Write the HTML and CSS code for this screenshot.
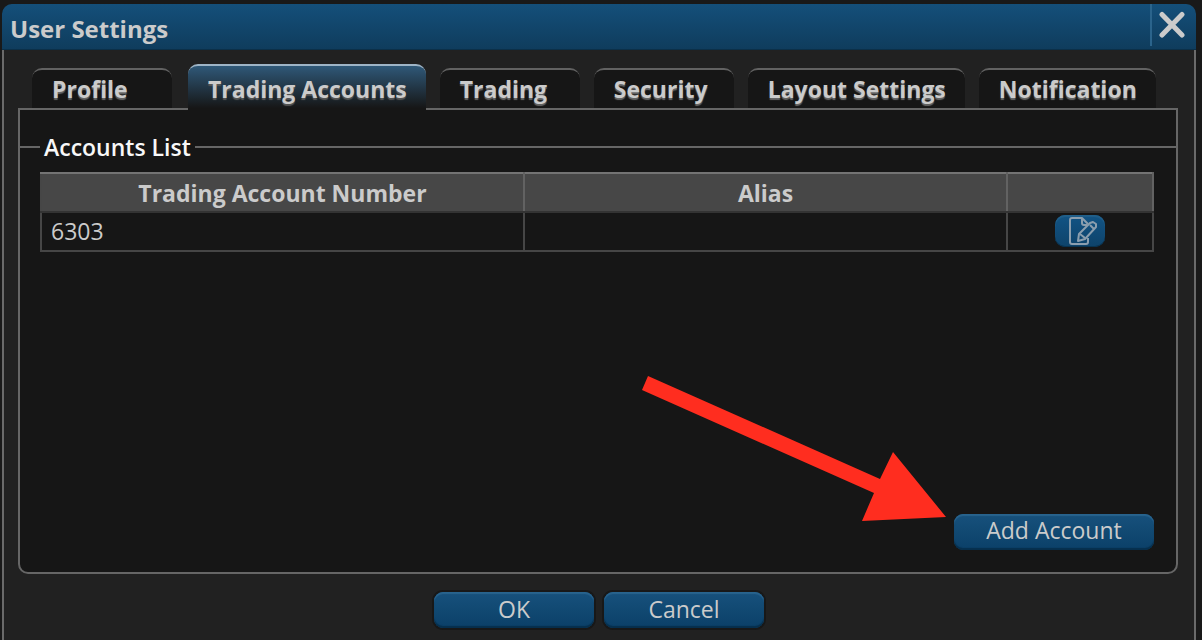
FILE: index.html
```html
<!DOCTYPE html>
<html lang="en">
<head>
<meta charset="utf-8">
<title>User Settings</title>
<link rel="stylesheet" href="styles.css">
</head>
<body>
<main class="dialog" role="dialog" aria-labelledby="dialog-title">
  <header class="titlebar">
    <h1 class="title" id="dialog-title">User Settings</h1>
    <button class="close" type="button" aria-label="Close">
      <svg width="28" height="30" viewBox="0 0 28 30"><path d="M3 4.500 23 25M23 4.500 3 25" fill="none" stroke="#cbcbcb" stroke-width="5" stroke-linecap="round"/></svg>
    </button>
  </header>
  <nav class="tabs" role="tablist">
    <button class="tab" type="button" role="tab">Profile</button>
    <button class="tab tab-active" type="button" role="tab" aria-selected="true">Trading Accounts</button>
    <button class="tab" type="button" role="tab">Trading</button>
    <button class="tab" type="button" role="tab">Security</button>
    <button class="tab" type="button" role="tab">Layout Settings</button>
    <button class="tab" type="button" role="tab">Notification</button>
  </nav>
  <section class="panel" role="tabpanel">
    <fieldset class="group">
      <legend class="legend">Accounts List</legend>
      <table class="accounts">
        <colgroup><col><col><col class="col-action"></colgroup>
        <thead>
          <tr><th scope="col">Trading Account Number</th><th scope="col">Alias</th><th></th></tr>
        </thead>
        <tbody>
          <tr>
            <td>6303</td>
            <td></td>
            <td class="cell-action">
              <button class="edit" type="button" aria-label="Edit account">
                <svg width="30" height="30" viewBox="0 0 30 30" fill="none" stroke="#8b9eae" stroke-width="2" stroke-linejoin="round"><path d="M20 22V26Q20 28 18 28H4Q2 28 2 26V4Q2 2 4 2H14L20 8M14 2V7Q14 9 16 9H19"/><path d="M25 6 28 8V11L17 23 10 25 11 18 22 7Z"/><path d="M22 9 26 13M12 18 17 22"/></svg>
              </button>
            </td>
          </tr>
        </tbody>
      </table>
    </fieldset>
    <div class="actions">
      <svg class="arrow" width="304" height="145" viewBox="0 0 304 145" aria-hidden="true"><path d="M6 0 238 103 251 76 304 141 220 145 232 117 0 14Z" fill="#ff2d1f"/></svg>
      <button class="btn btn-add" type="button">Add Account</button>
    </div>
  </section>
  <footer class="footer">
    <button class="btn" type="button">OK</button>
    <button class="btn" type="button">Cancel</button>
  </footer>
</main>
</body>
</html>
```
FILE: styles.css
```css
* {
  box-sizing: border-box;
}

body {
  margin: 0;
  background: #191919;
  color: #cbcbcb;
  font: 23px/30px "Open Sans", "Noto Sans", sans-serif;
}

button {
  margin: 0;
  border: 0;
  color: inherit;
  font: inherit;
  cursor: pointer;
}

svg {
  display: block;
}

.dialog {
  position: relative;
  display: flex;
  flex-direction: column;
  min-height: calc(100vh - 4px);
  margin: 4px 6px 0 2px;
  border-radius: 10px 10px 0 0;
  background: #212121;
}

.dialog::after {
  position: absolute;
  inset: 46px 0 0;
  border: solid #6a6a6a;
  border-width: 0 2px;
  content: "";
  pointer-events: none;
}

.titlebar {
  display: flex;
  justify-content: space-between;
  height: 46px;
  border-radius: 10px 10px 0 0;
  background: linear-gradient(#144f7a, #0f3c5c);
  box-shadow: inset 0 -1px #0b3049;
}

.title {
  margin: 0;
  padding: 0 8px;
  font-size: 24px;
  font-weight: 700;
  line-height: 50px;
}

.close {
  width: 46px;
  height: 42px;
  padding: 0 7px;
  border-left: 2px solid #2b648c;
  background: none;
}

.tabs {
  display: flex;
  align-items: flex-end;
  gap: 14px;
  padding: 14px 30px 0;
}

.tab {
  min-width: 140px;
  height: 40px;
  padding: 0 19px 0 20px;
  border-top: 2px solid #626262;
  border-radius: 10px 10px 0 0;
  background: #161616;
  font-weight: 700;
  line-height: 38px;
  text-align: left;
  text-shadow: 0 2px 1px #666;
}

.tab-active {
  z-index: 1;
  height: 46px;
  margin: 0 0 -2px 2px;
  border-color: #9eb4c6;
  background: linear-gradient(#2f5878, #161616 96%);
  line-height: 46px;
  text-shadow: 0 2px 1px #555;
}

.panel {
  display: flex;
  flex: 1;
  flex-direction: column;
  margin: 0 18px 0 16px;
  border: 2px solid #666;
  border-radius: 0 0 10px 10px;
  background: #161616;
}

.group {
  min-width: 0;
  margin: 22px 0 0;
  padding: 10px 22px 0 20px;
  border: 0;
  border-top: 2px solid #666;
}

.legend {
  margin: 0;
  padding: 0 4px;
  color: #f8f8f8;
  font-weight: 600;
}

.accounts {
  width: 100%;
  border-collapse: collapse;
  table-layout: fixed;
}

.col-action {
  width: 146px;
}

.accounts th,
.accounts td {
  height: 39px;
  padding: 0 9px 2px;
  border: 2px solid #464646;
}

.accounts th {
  padding-bottom: 0;
  border-top-color: #747474;
  border-right-color: #626262;
  border-bottom-color: #333;
  background: #474747;
  font-weight: 700;
}

.accounts .cell-action {
  padding: 0;
}

.edit {
  display: flex;
  align-items: center;
  justify-content: center;
  width: 50px;
  height: 32px;
  margin: 0 auto 2px;
  padding: 0 0 0 6px;
  border-radius: 10px;
  background: linear-gradient(#125485, #0e436a);
  box-shadow: inset 0 2px 1px #215f89, inset 0 -1px #093350;
}

.actions {
  position: relative;
  display: flex;
  justify-content: flex-end;
  margin-top: auto;
  padding: 0 22px 22px;
}

.arrow {
  position: absolute;
  right: 230px;
  bottom: 51px;
}

.btn {
  min-width: 160px;
  height: 36px;
  padding: 0 16px 4px;
  border-radius: 9px;
  background: linear-gradient(#17517c, #0b4068);
  box-shadow: inset 0 2px 1px #28638d, inset 0 -2px 1px #062f4d;
}

.btn-add {
  min-width: 200px;
}

.footer {
  display: flex;
  justify-content: center;
  gap: 10px;
  padding: 18px 0 12px;
}

.footer .btn {
  padding-bottom: 2px;
  box-shadow: inset 0 2px 1px #28638d, inset 0 -2px 1px #062f4d, 0 0 0 2px #181818;
}
```
